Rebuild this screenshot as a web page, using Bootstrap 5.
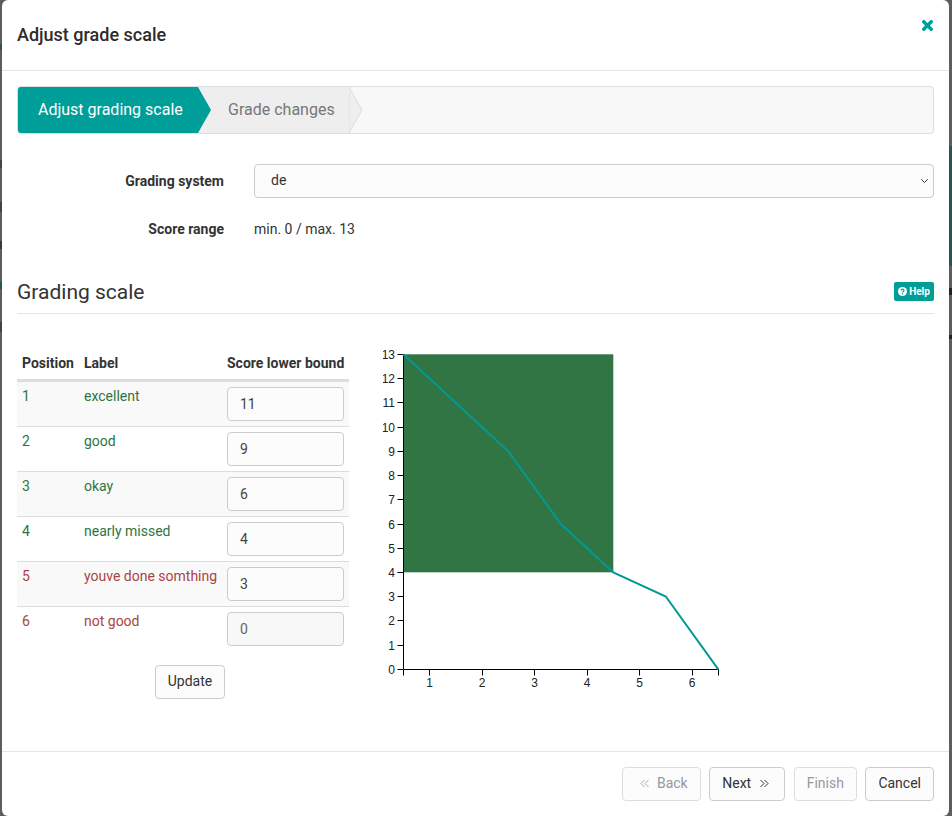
<!DOCTYPE html>
<html lang="en">
<head>
<meta charset="utf-8">
<title>Adjust grade scale</title>
<link rel="stylesheet" href="https://cdn.jsdelivr.net/npm/bootstrap@5.3.0/dist/css/bootstrap.min.css">
<style>
html,body{height:816px;overflow:hidden}
body{background-color:#5d5d5d;font-family:Roboto,"Liberation Sans",sans-serif;font-size:14px;color:#333;padding:0 3px 0 2px}
.dlg{height:816px;background:#fff;border-radius:6px;display:flex;flex-direction:column;border:0}
.dlg-head{height:71px;border-bottom:1px solid #e5e5e5;padding:0 15px;display:flex;align-items:center;justify-content:space-between}
.dlg-title{font-size:18px;font-weight:500;color:#2f2b2b;margin:0;padding-bottom:1px}
.dlg-x{width:11px;height:11px;display:block;border:0;background:none;padding:0;margin:0 1px 20px 0;line-height:0}
.dlg-body{flex:1 1 auto;padding:15px 15px 0}
.dlg-foot{border-top:1px solid #e5e5e5;padding:15px;height:65px;display:flex;justify-content:flex-end;gap:8.5px}
.wiz{height:48px;border:1px solid #ddd;border-radius:4px;background:#f8f8f8;display:flex;overflow:hidden;font-size:16px}
.wiz-step{display:flex;align-items:center;height:46px}
.wiz-on{background:#009e99;color:#fff;width:180px;padding-left:20px;font-weight:400}
.wiz-off{background:#eee;color:#777;width:138px;padding-left:17px}
.wiz-tip{display:block;width:13px;height:46px;flex:none}
.wiz-tipb{width:14px}
.frm{display:flex;align-items:center;margin:0}
.frm-a{margin-top:30px}
.frm-b{margin-top:14px;height:34px}
.frm-lbl{width:207px;text-align:right;font-weight:700;font-size:14px;margin:0 30px 0 0;color:#333}
.frm-sel{width:680px;height:34px;padding:0 30px 2px 16px;font-size:14px;color:#333;background-color:#fcfcfc;border:1px solid #ccc;border-radius:4px;font-family:inherit;background-size:9px 8px;background-position:right 4px center}
.sect{display:flex;justify-content:space-between;align-items:flex-start;border-bottom:1px solid #e5e5e5;height:35px;margin-top:33px}
.sect-t{font-size:21px;font-weight:400;color:#333;margin:0;line-height:24px;padding-top:1px}
.hlp{background:#009e99;color:#fff;font-size:10px;font-weight:700;height:19px;width:40px;border-radius:2px;display:flex;align-items:center;justify-content:center;gap:2px;margin-top:3px;text-decoration:none}
.main{display:flex;margin-top:25px;align-items:flex-start}
.tbl-w{width:332px;flex:none}
.tbl{margin:0;width:332px;table-layout:fixed;--bs-table-bg:transparent;border-collapse:collapse}
.tbl th{font-weight:700;font-size:14px;color:#333;padding:16px 5px 7px;height:41px;line-height:17px;border-bottom:3px solid #ddd;white-space:nowrap;text-align:left}
.tbl td{padding:5px;height:45px;border-bottom:1px solid #ddd;vertical-align:top;line-height:20px;white-space:nowrap;font-size:14px}
.tbl tbody tr:last-child td{border-bottom:0}
.tbl td.tx{padding-top:4px}
.tbl tr.zeb td{background:#f9f9f9}
.tg td{color:#2e7540}
.tr td{color:#a94442}
.cp{width:62px}.cl{width:143px}.cs{width:127px}
.num{width:117px;height:34px;padding:0 12px;font-size:14px;color:#444;background:#fcfcfc;border:1px solid #ccc;border-radius:4px;font-family:inherit}
.num:disabled{background:#f8f8f8;color:#666;opacity:1}
.upd-w{padding-left:138px;padding-top:13px}
.bx{height:34px;font-size:14px;padding:0 12px 2px;border:1px solid #ccc;border-radius:4px;background:#fcfcfc;color:#333;font-family:inherit;display:inline-flex;align-items:center;gap:8px;line-height:1}
.bx.off{color:#999;border-color:#ddd;opacity:1;background:#fcfcfc}
.upd-b{width:70px;justify-content:center;padding:0 0 2px}
.ic-b{margin-left:5px;margin-right:-1px}
.ic-n{margin-right:3px}
.chart{display:block;flex:none;margin-left:34px;margin-top:6px}
.chart text{font-family:"Liberation Sans",Arial,sans-serif;font-size:12px;fill:#222}
.leftstrip{position:fixed;left:0;top:0;width:2px;height:816px;background:linear-gradient(#5d5d5d 44px,#2b5452 44px,#2b5452 50px,#5d5d5d 50px,#5d5d5d 160px,#444 160px,#444 168px,#5d5d5d 168px,#5d5d5d 202px,#444 202px,#444 212px,#5d5d5d 212px,#5d5d5d 241px,#3a3a3a 241px,#3a3a3a 249px,#5d5d5d 249px,#5d5d5d 282px,#2b5452 282px,#2b5452 289px,#5d5d5d 289px,#5d5d5d 322px,#444 322px,#444 332px,#5d5d5d 332px)}
.rightstrip{position:fixed;left:949px;top:0;width:3px;height:816px;background:linear-gradient(#5d5d5d 146px,#2b5452 146px,#2b5452 266px,#5d5d5d 266px,#5d5d5d 288px,#222 288px,#222 295px,#5d5d5d 295px,#5d5d5d 335px,#222 335px,#222 339px,#5d5d5d 339px)}
</style>
</head>
<body>
<div class="leftstrip"></div><div class="rightstrip"></div>
<div class="dlg">
  <div class="dlg-head">
    <h5 class="dlg-title">Adjust grade scale</h5>
    <button type="button" class="dlg-x" aria-label="Close"><svg width="11" height="11" viewBox="0 0 11 11"><path d="M1.8 1.8 L9.2 9.2 M9.2 1.8 L1.8 9.2" stroke="#009e99" stroke-width="3.4" stroke-linecap="square" fill="none"/></svg></button>
  </div>
  <div class="dlg-body">
    <div class="wiz">
      <div class="wiz-step wiz-on">Adjust grading scale</div>
      <svg class="wiz-tip" viewBox="0 0 13 46"><rect width="13" height="46" fill="#eee"/><path d="M0 0 L13 23 L0 46Z" fill="#009e99"/></svg>
      <div class="wiz-step wiz-off">Grade changes</div>
      <svg class="wiz-tip wiz-tipb" viewBox="0 0 14 46"><path d="M0 0 L13 23 L0 46Z" fill="#eee" stroke="#ddd"/></svg>
    </div>
    <div class="frm frm-a">
      <label class="frm-lbl" for="gs">Grading system</label>
      <select id="gs" class="form-select frm-sel"><option>de</option></select>
    </div>
    <div class="frm frm-b">
      <div class="frm-lbl">Score range</div>
      <div>min. 0 / max. 13</div>
    </div>
    <div class="sect">
      <h3 class="sect-t">Grading scale</h3>
      <a class="hlp" href="#"><svg width="9" height="9" viewBox="0 0 9 9"><circle cx="4.5" cy="4.5" r="4.5" fill="#fff"/><path d="M3 3.5 C3 1.8 6 1.8 6 3.4 C6 4.5 4.5 4.4 4.5 5.5" stroke="#009e99" stroke-width="1.2" fill="none"/><rect x="3.9" y="6.2" width="1.2" height="1.2" fill="#009e99"/></svg>Help</a>
    </div>
    <div class="main">
      <div class="tbl-w">
        <table class="table tbl">
          <colgroup><col class="cp"><col class="cl"><col class="cs"></colgroup>
          <thead><tr><th>Position</th><th>Label</th><th>Score lower bound</th></tr></thead>
          <tbody>
            <tr class="tg zeb"><td class="tx">1</td><td class="tx">excellent</td><td><input class="form-control num" value="11"></td></tr>
            <tr class="tg"><td class="tx">2</td><td class="tx">good</td><td><input class="form-control num" value="9"></td></tr>
            <tr class="tg zeb"><td class="tx">3</td><td class="tx">okay</td><td><input class="form-control num" value="6"></td></tr>
            <tr class="tg"><td class="tx">4</td><td class="tx">nearly missed</td><td><input class="form-control num" value="4"></td></tr>
            <tr class="tr zeb"><td class="tx">5</td><td class="tx">youve done somthing</td><td><input class="form-control num" value="3"></td></tr>
            <tr class="tr"><td class="tx">6</td><td class="tx">not good</td><td><input class="form-control num" value="0" disabled></td></tr>
          </tbody>
        </table>
        <div class="upd-w"><button type="button" class="btn bx upd-b">Update</button></div>
      </div>
      <svg class="chart" width="370" height="360" viewBox="383 345 370 360">
        <rect x="403.3" y="354.3" width="210" height="218" fill="#317545"/>
        <g stroke="#000" stroke-width="1" fill="none">
          <path d="M403.5 354.3 V669.5 H718.5"/>
          <path d="M397.5 354.5h6M397.5 378.5h6M397.5 402.5h6M397.5 427.5h6M397.5 451.5h6M397.5 475.5h6M397.5 499.5h6M397.5 524.5h6M397.5 548.5h6M397.5 572.5h6M397.5 596.5h6M397.5 620.5h6M397.5 645.5h6M397.5 669.5h6"/>
          <path d="M403.5 669.5v6M429.5 669.5v6M482.5 669.5v6M534.5 669.5v6M587.5 669.5v6M639.5 669.5v6M692.5 669.5v6M718.5 669.5v6"/>
        </g>
        <path d="M403.3 354.3 L508.3 451.3 L560.8 524 L613.3 572.3 L665.8 596.5 L718.3 669.3" stroke="#009a96" stroke-width="2" fill="none"/>
        <g text-anchor="end">
          <text x="395" y="358.5">13</text><text x="395" y="382.5">12</text><text x="395" y="406.5">11</text><text x="395" y="431.5">10</text><text x="395" y="455.5">9</text><text x="395" y="479.5">8</text><text x="395" y="503.5">7</text><text x="395" y="528.5">6</text><text x="395" y="552.5">5</text><text x="395" y="576.5">4</text><text x="395" y="600.5">3</text><text x="395" y="624.5">2</text><text x="395" y="649.5">1</text><text x="395" y="673.5">0</text>
        </g>
        <g text-anchor="middle">
          <text x="429.5" y="687">1</text><text x="482" y="687">2</text><text x="534.5" y="687">3</text><text x="587" y="687">4</text><text x="639.5" y="687">5</text><text x="692" y="687">6</text>
        </g>
      </svg>
    </div>
  </div>
  <div class="dlg-foot">
    <button type="button" class="btn bx off"><svg class="ic-b" width="10" height="9" viewBox="0 0 10 9"><path d="M4.5 1 L1 4.5 L4.5 8 M8.5 1 L5 4.5 L8.5 8" stroke="#aaa" fill="none"/></svg>Back</button>
    <button type="button" class="btn bx">Next<svg class="ic-n" width="10" height="9" viewBox="0 0 10 9"><path d="M1.5 1 L5 4.5 L1.5 8 M5.5 1 L9 4.5 L5.5 8" stroke="#333" fill="none"/></svg></button>
    <button type="button" class="btn bx off">Finish</button>
    <button type="button" class="btn bx">Cancel</button>
  </div>
</div>
<script src="https://cdn.jsdelivr.net/npm/bootstrap@5.3.0/dist/js/bootstrap.bundle.min.js"></script>
</body>
</html>
